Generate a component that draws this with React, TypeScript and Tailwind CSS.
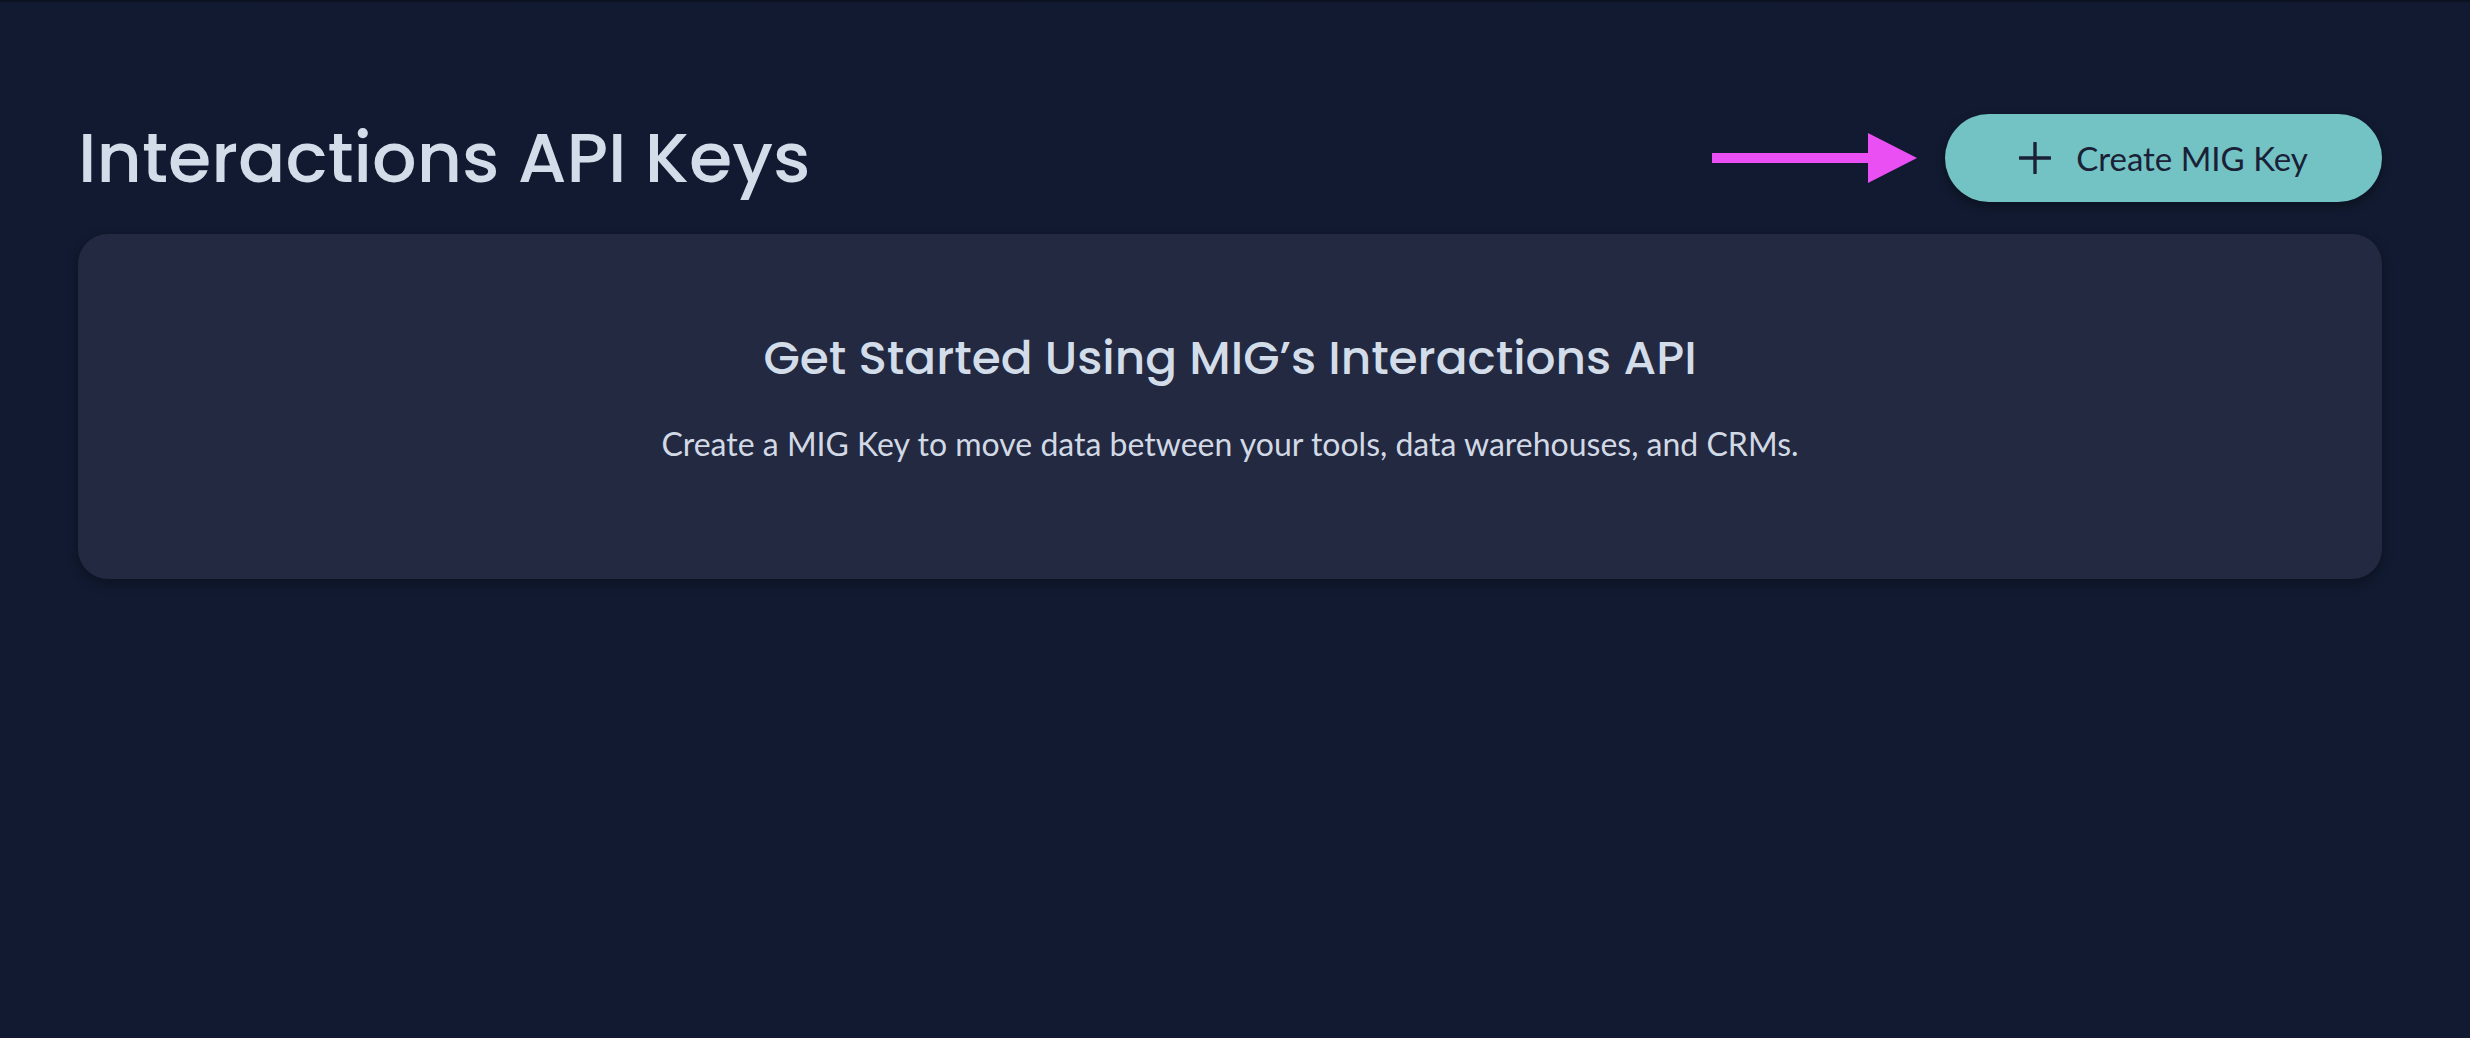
const heading = { fontFamily: "Poppins, Inter, 'Noto Sans', sans-serif" };
const body = { fontFamily: "Lato, 'Open Sans', sans-serif" };

function Arrow() {
  return (
    <svg width="205" height="50" viewBox="0 0 205 50" className="shrink-0">
      <rect x="0" y="20" width="160" height="10" fill="#ea4ff4" />
      <polygon points="156,0 205,25 156,50" fill="#ea4ff4" />
    </svg>
  );
}

function PlusIcon() {
  return (
    <svg width="32" height="32" viewBox="0 0 32 32" className="shrink-0">
      <path d="M16 1v30M1 16h30" stroke="#1a2136" strokeWidth="3.4" strokeLinecap="round" fill="none" />
    </svg>
  );
}

export default function App() {
  return (
    <div className="min-h-screen w-full bg-[#111a30]">
      <div className="h-[3px] bg-gradient-to-b from-[#0a0f1c] to-[#111a30]" />
      <main className="pl-[78px] pr-[88px]">
        {/* header */}
        <div className="flex items-center justify-between pt-[111px]">
          <h1
            className="text-[70px] leading-[88px] font-medium text-[#d3dde9]"
            style={heading}
          >
            Interactions API Keys
          </h1>
          <div className="flex items-center gap-[28px]">
            <Arrow />
            <button
              className="flex items-center justify-center gap-[25px] h-[88px] w-[437px] rounded-full bg-[#73c2c4] text-[#1a2136] shadow-[0_4px_10px_rgba(0,0,0,0.35)]"
              style={body}
            >
              <PlusIcon />
              <span className="text-[33px] leading-none">Create MIG Key</span>
            </button>
          </div>
        </div>

        {/* empty state card */}
        <section className="mt-[32px] h-[345px] rounded-[30px] bg-[#222941] shadow-[0_4px_12px_rgba(0,0,0,0.3)] flex flex-col items-center pt-[94px]">
          <h2
            className="text-[47px] leading-[60px] font-medium text-[#d3dde9]"
            style={heading}
          >
            Get Started Using MIG’s Interactions API
          </h2>
          <p
            className="mt-[36px] text-[32px] leading-[40px] text-[#d2d9e5]"
            style={body}
          >
            Create a MIG Key to move data between your tools, data warehouses, and CRMs.
          </p>
        </section>
      </main>
    </div>
  );
}
